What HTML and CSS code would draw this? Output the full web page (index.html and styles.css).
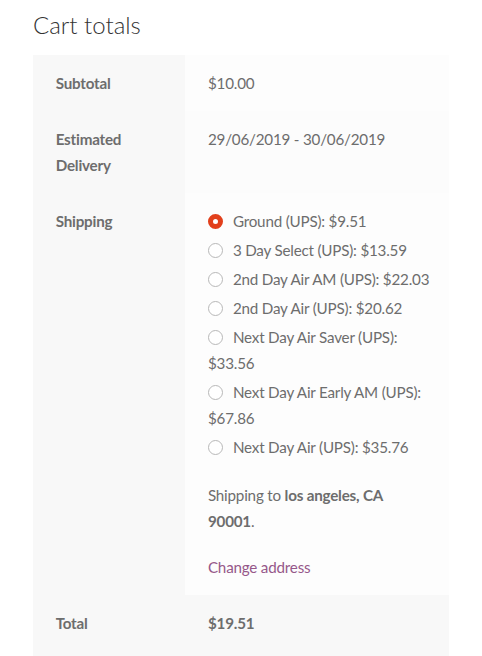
FILE: index.html
```html
<!DOCTYPE html>
<html lang="en">
<head>
    <meta charset="UTF-8">
    <title>Cart totals</title>
    <link rel="stylesheet" href="styles.css">
</head>
<body>
<div class="cart-totals">
    <h2>Cart totals</h2>

    <table class="totals-table">
        <tbody>
        <tr>
            <th>Subtotal</th>
            <td>$10.00</td>
        </tr>
        <tr class="even">
            <th>Estimated Delivery</th>
            <td>29/06/2019 - 30/06/2019</td>
        </tr>
        <tr>
            <th>Shipping</th>
            <td>
                <ul class="shipping-methods">
                    <li><input type="radio" name="method" id="m1" checked><label for="m1">Ground (UPS): $9.51</label></li>
                    <li><input type="radio" name="method" id="m2"><label for="m2">3 Day Select (UPS): $13.59</label></li>
                    <li><input type="radio" name="method" id="m3"><label for="m3">2nd Day Air AM (UPS): $22.03</label></li>
                    <li><input type="radio" name="method" id="m4"><label for="m4">2nd Day Air (UPS): $20.62</label></li>
                    <li><input type="radio" name="method" id="m5"><label for="m5">Next Day Air Saver (UPS): $33.56</label></li>
                    <li><input type="radio" name="method" id="m6"><label for="m6">Next Day Air Early AM (UPS): $67.86</label></li>
                    <li><input type="radio" name="method" id="m7"><label for="m7">Next Day Air (UPS): $35.76</label></li>
                </ul>
                <p class="destination">Shipping to <strong>los angeles, CA 90001</strong>.</p>
                <a href="#" class="change-address">Change address</a>
            </td>
        </tr>
        <tr class="order-total">
            <th>Total</th>
            <td><strong>$19.51</strong></td>
        </tr>
        </tbody>
    </table>
</div>
</body>
</html>
```

FILE: styles.css
```css
html,
body {
    overflow: hidden;
}

body {
    margin: 0;
    font-family: Lato, "Liberation Sans", sans-serif;
    font-size: 15.2px;
    letter-spacing: -0.2px;
    line-height: 26px;
    color: #6d6d6d;
    background: #fff;
}

.cart-totals {
    padding-left: 33px;
}

h2 {
    margin: 10px 0 15px;
    font-size: 24px;
    font-weight: 300;
    letter-spacing: 0;
    line-height: 30px;
    color: #333;
}

.totals-table {
    width: 416px;
    border-collapse: separate;
    border-spacing: 0;
}

.totals-table th,
.totals-table td {
    padding: 15px 22.65px;
    text-align: left;
    vertical-align: top;
}

.totals-table th {
    width: 107px;
    font-weight: 700;
    background-color: #f8f8f8;
}

.totals-table td {
    padding-right: 15px;
    background-color: #fdfdfd;
}

.totals-table .even td {
    background-color: #fcfcfc;
}

.order-total th,
.order-total td {
    padding-bottom: 25px;
}

.order-total td {
    background-color: #f8f8f8;
}

.shipping-methods {
    list-style: none;
    margin: 0 0 22px;
    padding: 0;
}

.shipping-methods li + li {
    margin-top: 3px;
}

.shipping-methods input[type="radio"] {
    -webkit-appearance: none;
    appearance: none;
    box-sizing: border-box;
    width: 15px;
    height: 15px;
    margin: 0 10px 0 0;
    border: 1px solid #b8b8b8;
    border-radius: 50%;
    background: #fff;
    vertical-align: -2px;
}

.shipping-methods input[type="radio"]:checked {
    border: 5px solid #e2401c;
}

.destination {
    margin: 0 0 20px;
    padding-right: 20px;
}

.destination strong {
    font-weight: 700;
}

.change-address {
    color: #96588a;
    text-decoration: none;
}
```
